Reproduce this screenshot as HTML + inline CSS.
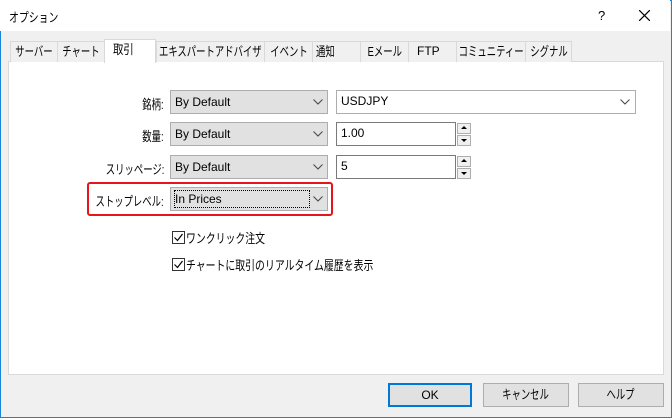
<!DOCTYPE html>
<html><head><meta charset="utf-8"><style>
*{box-sizing:border-box;margin:0;padding:0}
body{width:672px;height:418px;position:relative;overflow:hidden;background:#f0f0f0;font-family:"Liberation Sans","Noto Sans CJK JP",sans-serif;font-size:12px;color:#000}
.win{position:absolute;left:0;top:0;width:672px;height:418px;border:1px solid #1883d7}
.title{position:absolute;left:0;top:0;width:670px;height:31px;background:#fff}
.a{position:absolute;white-space:nowrap}
.j{display:inline-block;transform:scaleX(.72);white-space:nowrap;font-size:13px}
.tab{position:absolute;top:41px;height:21px;border:1px solid #d9d9d9;border-bottom:none;background:#f0f0f0;display:flex;justify-content:center;line-height:19px;font-size:12px;white-space:nowrap}
.tab .j{transform-origin:center;flex:none}
.panel{position:absolute;left:8px;top:61px;width:656px;height:314px;background:#fff;border:1px solid #d9d9d9}
.combo{position:absolute;width:158px;height:24px;background:#e1e1e1;border:1px solid #adadad;line-height:22px;padding-left:4px}
.combo svg{position:absolute;right:4px;top:8px}
.edit{position:absolute;height:24px;background:#fff;border:1px solid #7a7a7a;line-height:21px;padding-left:4px}
.spin{position:absolute;left:457px;width:14px;height:11px;background:#f0f0f0;border:1px solid #adadad}
.lbl{position:absolute;right:508px;text-align:right;white-space:nowrap}
.lbl .j{transform-origin:right center}
.btn{position:absolute;top:383px;height:24px;background:#e1e1e1;border:1px solid #adadad;display:flex;justify-content:center;line-height:22px;white-space:nowrap}
.btn .j{flex:none}
.cb{position:absolute;left:172px;width:13px;height:13px;border:1px solid #333;background:#fff}
.l .j{transform-origin:left center;transform:scaleX(.76)}
</style></head><body>
<div class="win"></div>
<div class="title"></div>
<div class="a l" style="left:9px;top:7px"><span class="j">オプション</span></div>
<div class="a" style="left:598px;top:8px;font-size:13px">?</div>
<svg class="a" style="left:639px;top:10px" width="11" height="11"><path d="M0 0L11 11M11 0L0 11" stroke="#000" stroke-width="1.2"/></svg>
<div class="panel"></div>
<div class="tab" style="left:10px;width:48px"><span class="j">サーバー</span></div>
<div class="tab" style="left:57px;width:48px"><span class="j">チャート</span></div>
<div class="tab" style="left:156px;width:109px"><span class="j">エキスパートアドバイザ</span></div>
<div class="tab" style="left:264px;width:49px"><span class="j">イベント</span></div>
<div class="tab" style="left:312px;width:49px;justify-content:flex-start;padding-left:3px"><span class="j" style="transform-origin:left center">通知</span></div>
<div class="tab" style="left:360px;width:49px"><span class="j">Eメール</span></div>
<div class="tab" style="left:408px;width:49px;justify-content:flex-start;padding-left:8px">FTP</div>
<div class="tab" style="left:456px;width:70px"><span class="j">コミュニティー</span></div>
<div class="tab" style="left:525px;width:47px"><span class="j">シグナル</span></div>
<div class="tab" style="left:104px;top:39px;width:52px;height:24px;background:#fff;justify-content:flex-start;padding-left:8px;line-height:20px"><span class="j" style="transform-origin:left center;transform:scaleX(.8)">取引</span></div>

<div class="lbl" style="top:94px"><span class="j">銘柄:</span></div>
<div class="lbl" style="top:126px"><span class="j">数量:</span></div>
<div class="lbl" style="top:159px"><span class="j">スリッページ:</span></div>
<div class="lbl" style="top:191px"><span class="j">ストップレベル:</span></div>

<div class="combo" style="left:170px;top:90px">By Default<svg width="10" height="6"><path d="M0.5 0.5L5 5L9.5 0.5" fill="none" stroke="#444"/></svg></div>
<div class="combo" style="left:170px;top:122px">By Default<svg width="10" height="6"><path d="M0.5 0.5L5 5L9.5 0.5" fill="none" stroke="#444"/></svg></div>
<div class="combo" style="left:170px;top:155px">By Default<svg width="10" height="6"><path d="M0.5 0.5L5 5L9.5 0.5" fill="none" stroke="#444"/></svg></div>
<div class="combo" style="left:170px;top:187px"><span style="outline:1px dotted #000;display:inline-block;width:134px;line-height:16px;margin-top:2px">In Prices</span><svg width="10" height="6"><path d="M0.5 0.5L5 5L9.5 0.5" fill="none" stroke="#444"/></svg></div>
<div class="a" style="left:87px;top:182px;width:246px;height:34px;border:2px solid #e8141b;border-radius:3px"></div>

<div class="edit" style="left:336px;top:90px;width:300px;border-color:#adadad">USDJPY<svg style="position:absolute;right:5px;top:8px" width="10" height="6"><path d="M0.5 0.5L5 5L9.5 0.5" fill="none" stroke="#444"/></svg></div>
<div class="edit" style="left:336px;top:122px;width:120px">1.00</div>
<div class="spin" style="top:123px"></div><div class="spin" style="top:135px"></div>
<div class="a" style="left:461px;top:126px;width:0;height:0;border:3px solid transparent;border-bottom:3px solid #000;border-top:none"></div>
<div class="a" style="left:461px;top:139px;width:0;height:0;border:3px solid transparent;border-top:3px solid #000;border-bottom:none"></div>
<div class="edit" style="left:336px;top:155px;width:120px">5</div>
<div class="spin" style="top:156px"></div><div class="spin" style="top:168px"></div>
<div class="a" style="left:461px;top:159px;width:0;height:0;border:3px solid transparent;border-bottom:3px solid #000;border-top:none"></div>
<div class="a" style="left:461px;top:172px;width:0;height:0;border:3px solid transparent;border-top:3px solid #000;border-bottom:none"></div>

<div class="cb" style="top:231px"><svg width="11" height="11" style="position:absolute;left:0;top:0"><path d="M1.5 5.5L4.5 8.5L9.5 2" fill="none" stroke="#000" stroke-width="1.2"/></svg></div>
<div class="a l" style="left:186px;top:228px"><span class="j">ワンクリック注文</span></div>
<div class="cb" style="top:258px"><svg width="11" height="11" style="position:absolute;left:0;top:0"><path d="M1.5 5.5L4.5 8.5L9.5 2" fill="none" stroke="#000" stroke-width="1.2"/></svg></div>
<div class="a l" style="left:186px;top:255px"><span class="j">チャートに取引のリアルタイム履歴を表示</span></div>

<div class="btn" style="left:388px;width:84px;border:2px solid #0078d7;line-height:20px">OK</div>
<div class="btn" style="left:483px;width:86px"><span class="j">キャンセル</span></div>
<div class="btn" style="left:578px;width:86px"><span class="j">ヘルプ</span></div>
</body></html>
